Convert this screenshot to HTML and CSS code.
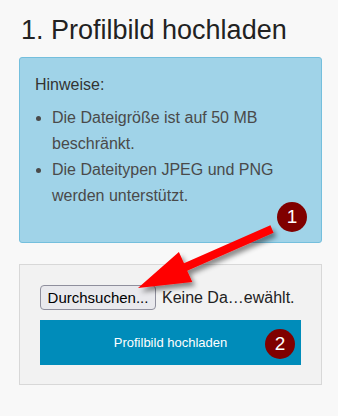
FILE: index.html
```html
<!DOCTYPE html>
<html lang="de">
<head>
    <meta charset="UTF-8">
    <title>Profilbild hochladen</title>
    <meta name="viewport" content="width=device-width, initial-scale=1">
    <link rel="stylesheet" href="styles.css">
</head>
<body>
<div class="page">
    <h1>1. Profilbild hochladen</h1>

    <div class="callout">
        <p>Hinweise:</p>
        <ul>
            <li>Die Dateigröße ist auf 50 MB beschränkt.</li>
            <li>Die Dateitypen JPEG und PNG werden unterstützt.</li>
        </ul>
        <span class="step step-one">1</span>
    </div>

    <div class="panel">
        <div class="file-row">
            <button type="button" class="browse">Durchsuchen...</button>
            <span class="file-name">Keine Da…ewählt.</span>
        </div>
        <div class="submit-wrap">
            <button type="submit" class="upload">Profilbild hochladen</button>
            <span class="step step-two">2</span>
        </div>
    </div>

    <!-- Pfeil von Schritt 1 zum Auswahlknopf -->
    <svg class="arrow" width="338" height="416" viewBox="0 0 338 416">
        <defs>
            <filter id="shadow" x="-20%" y="-20%" width="140%" height="160%">
                <feDropShadow dx="3" dy="4" stdDeviation="2.5" flood-color="#000" flood-opacity="0.45"/>
            </filter>
        </defs>
        <polygon filter="url(#shadow)" fill="#ff0000"
                 points="270.4,225.3 273.6,232.7 187.2,270.7 192.3,282.1 138,288 178.9,251.9 184,263.3"/>
    </svg>
</div>
</body>
</html>
```

FILE: styles.css
```css
body { margin: 0; background: #f8f8f8; font-family: "Liberation Sans", Arial, sans-serif; color: #222; }
.page { position: relative; padding: 14px 16px 20px 19px; }
h1 { margin: 0 0 11px 2px; font-size: 27px; line-height: 32px; font-weight: normal; color: #222; }

.callout { position: relative; background: #a0d3e8; border: 1px solid #74bfdd; border-radius: 3px; padding: 14px 15px 33px; font-size: 16px; line-height: 26px; }
.callout p { margin: 0; color: #333; }
.callout ul { margin: 7px 0 0; padding-left: 17px; color: #4a4a4a; }

.panel { margin-top: 21px; background: #f2f2f2; border: 1px solid #d8d8d8; padding: 20px 20px 19px; }
.file-row { display: flex; align-items: center; gap: 6px; height: 25px; }
.browse { height: 25px; width: 116px; padding: 0; background: #e9e9ed; border: 1px solid #8f8f9d; border-radius: 4px; font-family: inherit; font-size: 15px; color: #000; }
.file-name { font-size: 16px; color: #222; }

.submit-wrap { position: relative; margin-top: 10px; }
.upload { display: block; width: 100%; height: 45px; background: #008cba; border: none; color: #fff; font-family: inherit; font-size: 13px; cursor: pointer; }

.step { position: absolute; width: 30px; height: 30px; border-radius: 50%; background: #800000; color: #fff; font-size: 19px; line-height: 30px; text-align: center; }
.step-one { right: 14px; bottom: 10px; }
.step-two { right: 6px; top: 9px; }

.arrow { position: absolute; left: 0; top: 0; pointer-events: none; }
```
